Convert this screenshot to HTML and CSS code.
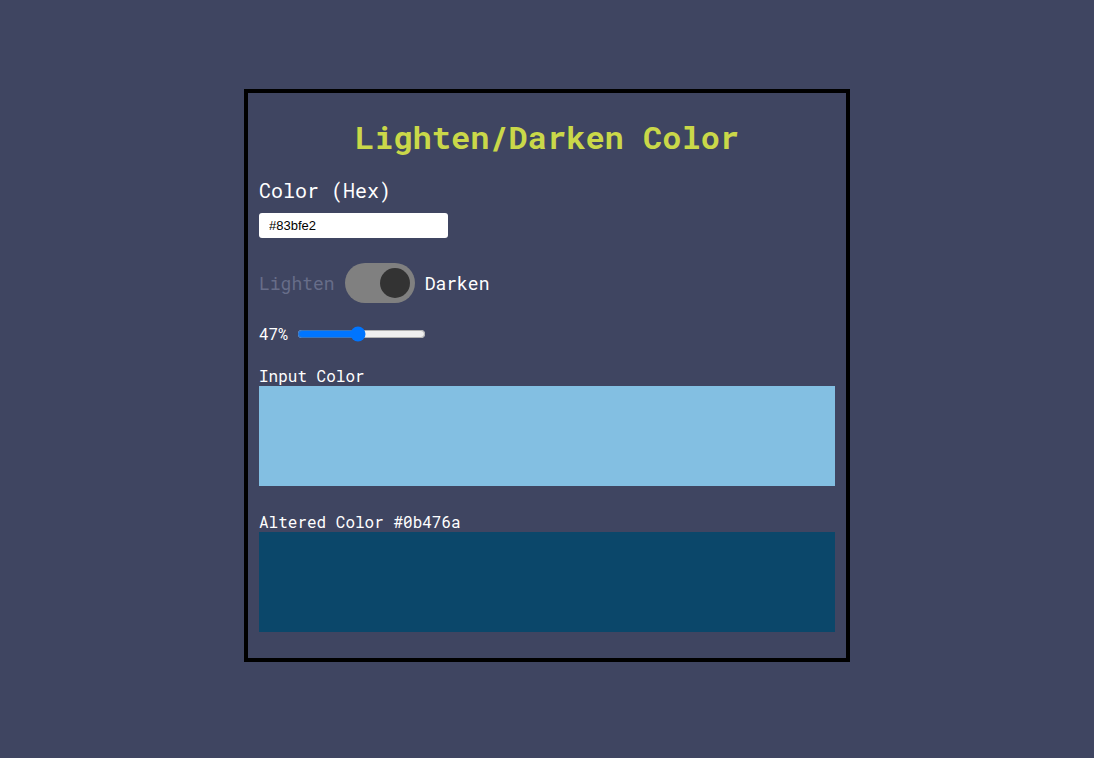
FILE: index.html
```html
<!DOCTYPE html>
<html lang="en">
<head>
<meta charset="utf-8">
<title>Lighten/Darken Color</title>
<link rel="stylesheet" href="styles.css">
</head>
<body>
<main class="card">
  <h1 class="title">Lighten/Darken Color</h1>
  <label class="field-label" for="hex">Color (Hex)</label>
  <input class="hex-input" id="hex" type="text" value="#83bfe2">
  <div class="toggle-row">
    <span class="toggle-text dim">Lighten</span>
    <span class="toggle"><span class="knob"></span></span>
    <span class="toggle-text">Darken</span>
  </div>
  <div class="slider-row">
    <span class="pct">47%</span>
    <input class="range" type="range" min="0" max="100" value="47">
  </div>
  <div class="swatch-label">Input Color</div>
  <div class="swatch" style="background:#83bfe2"></div>
  <div class="swatch-label altered">Altered Color #0b476a</div>
  <div class="swatch" style="background:#0b476a"></div>
</main>
</body>
</html>
```

FILE: styles.css
```css
html, body {
  margin: 0;
  padding: 0;
}
body {
  background: #3f4561;
  min-height: 100vh;
  display: flex;
  justify-content: center;
  align-items: flex-start;
  font-family: "Roboto Mono", "DejaVu Sans Mono", monospace;
  color: #ffffff;
}
.card {
  margin-top: 89px;
  width: 576px;
  border: 4px solid #000000;
  padding: 24px 11px 26px;
  display: flex;
  flex-direction: column;
  align-items: flex-start;
}
.title {
  align-self: stretch;
  margin: 0;
  text-align: center;
  font-size: 32px;
  line-height: 40px;
  font-weight: bold;
  color: #cad849;
}
.field-label {
  margin-top: 21px;
  font-size: 20px;
  line-height: 24px;
}
.hex-input {
  margin: 11px 0 0;
  width: 189px;
  height: 25px;
  box-sizing: border-box;
  border: none;
  border-radius: 3px;
  padding: 0 10px;
  background: #ffffff;
  color: #000000;
  font-family: "Liberation Sans", Arial, sans-serif;
  font-size: 13px;
  outline: none;
}
.toggle-row {
  margin-top: 25px;
  display: flex;
  align-items: center;
  gap: 10px;
  height: 40px;
}
.toggle-text {
  font-size: 18px;
  line-height: 24px;
  color: #ffffff;
}
.toggle-text.dim {
  color: #676d89;
}
.toggle {
  width: 70px;
  height: 40px;
  border-radius: 20px;
  background: #808080;
  display: flex;
  align-items: center;
  justify-content: flex-end;
  padding: 0 5px;
  box-sizing: border-box;
}
.knob {
  width: 30px;
  height: 30px;
  border-radius: 50%;
  background: #333333;
}
.slider-row {
  margin-top: 21px;
  display: flex;
  align-items: center;
  gap: 7px;
  height: 20px;
}
.pct {
  font-size: 16px;
  line-height: 20px;
}
.range {
  width: 129px;
  margin: 2px;
}
.swatch-label {
  margin-top: 22px;
  font-size: 16px;
  line-height: 20px;
}
.swatch-label.altered {
  margin-top: 26px;
}
.swatch {
  width: 576px;
  height: 100px;
}
```
